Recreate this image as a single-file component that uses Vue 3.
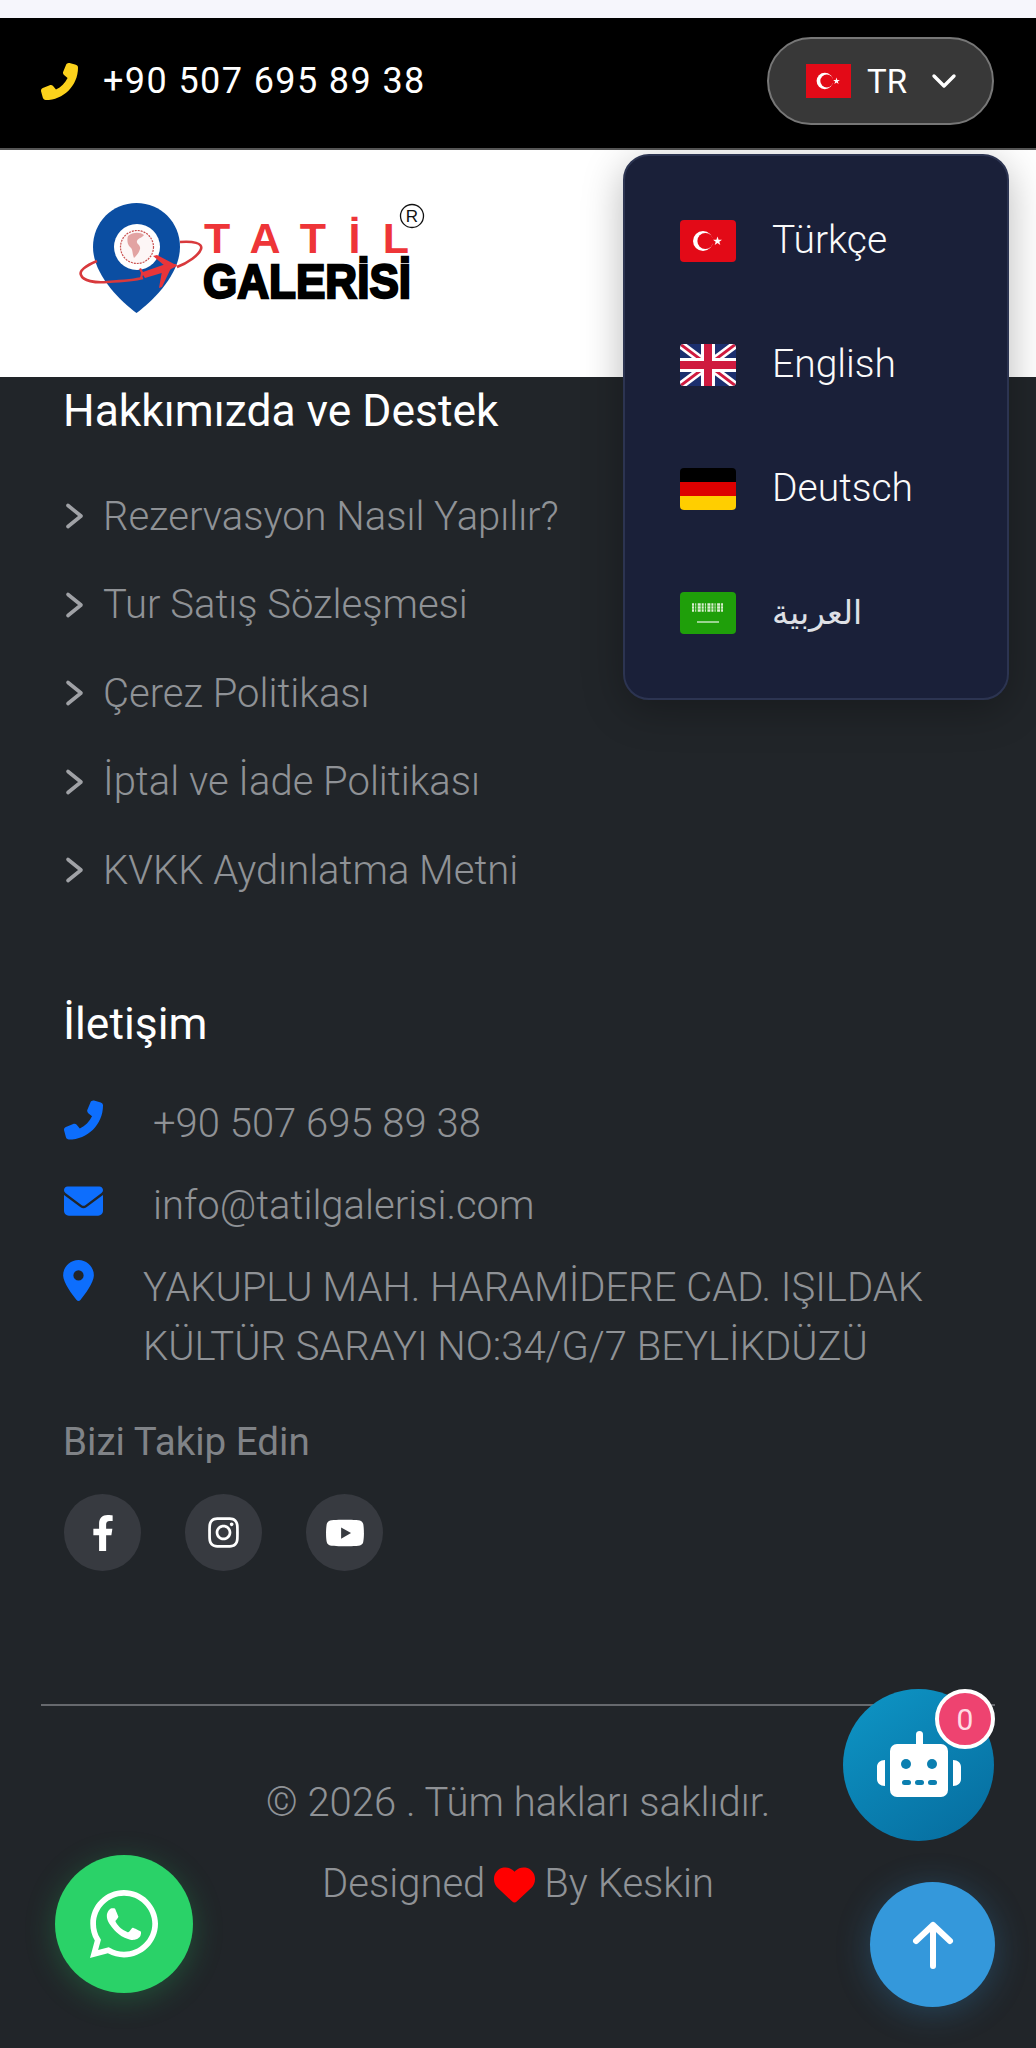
<script setup>
const links = ['Rezervasyon Nasıl Yapılır?', 'Tur Satış Sözleşmesi', 'Çerez Politikası', 'İptal ve İade Politikası', 'KVKK Aydınlatma Metni']
</script>

<template>
  <div class="page">
    <div class="strip"></div>
    <div class="topbar">
      <div class="top-phone">
        <svg class="top-phone-icon" viewBox="0 0 512 512"><g transform="translate(512 0) scale(-1 1)"><path d="M164.9 24.6c-7.7-18.6-28-28.5-47.4-23.2l-88 24C12.1 30.2 0 46 0 64C0 311.4 200.6 512 448 512c18 0 33.8-12.1 38.6-29.5l24-88c5.3-19.4-4.6-39.7-23.2-47.4l-96-40c-16.3-6.8-35.2-2.1-46.3 11.6L304.7 368C234.3 334.7 177.3 277.7 144 207.3L193.3 167c13.7-11.2 18.4-30 11.6-46.3l-40-96z"/></g></svg>
        <span>+90 507 695 89 38</span>
      </div>
      <div class="lang-btn">
        <svg class="flag-sm" viewBox="0 0 45 34"><rect width="45" height="34" fill="#e30a17"/><circle cx="18.8" cy="17" r="8.2" fill="#fff"/><circle cx="20.8" cy="17" r="6.5" fill="#e30a17"/><polygon fill="#fff" points="30.5,13.6 31.3,16 33.9,16 31.8,17.6 32.6,20 30.5,18.5 28.4,20 29.2,17.6 27.1,16 29.7,16"/></svg>
        <span class="lang-code">TR</span>
        <svg class="chev" viewBox="0 0 26 16"><path d="M3 3l10 10L23 3" fill="none" stroke="#fff" stroke-width="3.4" stroke-linecap="round" stroke-linejoin="round"/></svg>
      </div>
    </div>

    <header class="brand">
      <svg class="logo" viewBox="0 0 350 120">
        <path d="M87 39C100 38 110 40 108 46 106 52 95 60 84 64" fill="none" stroke="#d8393c" stroke-width="2.6"/>
        <path d="M43.5 0C19 0 0 19.5 0 44c0 27 26 53 43.5 66C61 97 87 71 87 44 87 19.5 68 0 43.5 0z" fill="#0b4ea2"/>
        <circle cx="44" cy="44" r="23" fill="#fff"/>
        <circle cx="44" cy="44" r="16.5" fill="#fdf6f6" stroke="#c9504f" stroke-width="1.2" stroke-dasharray="2 1"/>
        <path d="M35 33c5-4 12-4 16-1-2 3-6 3-7 6s4 4 3 8-4 7-6 9c-2-5-1-9-4-11-3-3-3-8-2-11z" fill="#e2a3a2"/>
        <path d="M4 58C-8 63-14 68-12 72-10 78 2 80 14 79 30 78 42 77 50 75" fill="none" stroke="#d8393c" stroke-width="2.6"/>
        <path d="M50 72l2 3 20-6 12-6-1-2-13 1-20 7-2-4-2 1 2 4-1 5 2 0z" fill="#e8353a"/>
        <path d="M72 63L60 53l4-1 19 10zM69 68l-3 17 3-1 9-19z" fill="#e8353a"/>
        <text x="111" y="50" class="logo-top" textLength="205" lengthAdjust="spacing">TATİL</text>
        <text x="110" y="95" class="logo-bottom" textLength="208" lengthAdjust="spacingAndGlyphs">GALERİSİ</text>
        <circle cx="319" cy="13" r="11.5" fill="#fff" stroke="#111" stroke-width="1.3"/>
        <text x="319" y="19" class="logo-r">R</text>
      </svg>
    </header>

    <footer class="footer">
      <div class="about">
        <h3 class="heading">Hakkımızda ve Destek</h3>
        <ul class="links">
          <li v-for="l in links" :key="l" class="link">
            <svg class="link-chev" viewBox="0 0 20 28"><path d="M4 3.5L17 14 4 24.5" fill="none" stroke="#a0a2a6" stroke-width="3.6" stroke-linecap="round" stroke-linejoin="round"/></svg>
            <span>{{ l }}</span>
          </li>
        </ul>
      </div>

      <div class="contact">
        <h3 class="heading">İletişim</h3>
        <div class="c-row c-phone">
          <svg class="c-icon" viewBox="0 0 512 512"><g transform="translate(512 0) scale(-1 1)"><path d="M164.9 24.6c-7.7-18.6-28-28.5-47.4-23.2l-88 24C12.1 30.2 0 46 0 64C0 311.4 200.6 512 448 512c18 0 33.8-12.1 38.6-29.5l24-88c5.3-19.4-4.6-39.7-23.2-47.4l-96-40c-16.3-6.8-35.2-2.1-46.3 11.6L304.7 368C234.3 334.7 177.3 277.7 144 207.3L193.3 167c13.7-11.2 18.4-30 11.6-46.3l-40-96z"/></g></svg>
          <span>+90 507 695 89 38</span>
        </div>
        <div class="c-row c-mail">
          <svg class="c-icon" viewBox="0 64 512 384"><path d="M48 64C21.5 64 0 85.5 0 112c0 15.1 7.1 29.3 19.2 38.4L236.8 313.6c11.4 8.5 27 8.5 38.4 0L492.8 150.4c12.1-9.1 19.2-23.3 19.2-38.4c0-26.5-21.5-48-48-48H48zM0 176V384c0 35.3 28.7 64 64 64H448c35.3 0 64-28.7 64-64V176L294.4 339.2c-22.8 17.1-54 17.1-76.8 0L0 176z"/></svg>
          <span>info@tatilgalerisi.com</span>
        </div>
        <div class="c-row c-addr">
          <svg class="c-pin" viewBox="0 0 384 512"><path d="M215.7 499.2C267 435 384 279.4 384 192C384 86 298 0 192 0S0 86 0 192c0 87.4 117 243 168.3 307.2c12.3 15.3 35.1 15.3 47.4 0zM192 128a64 64 0 1 1 0 128 64 64 0 1 1 0-128z"/></svg>
          <span>YAKUPLU MAH. HARAMİDERE CAD. IŞILDAK KÜLTÜR SARAYI NO:34/G/7 BEYLİKDÜZÜ</span>
        </div>
        <div class="follow">Bizi Takip Edin</div>
        <div class="socials">
          <div class="social"><svg class="s-fb" viewBox="0 0 320 512"><path d="M279.14 288l14.22-92.66h-88.91v-60.13c0-25.35 12.42-50.06 52.24-50.06h40.42V6.26S260.43 0 225.36 0c-73.22 0-121.08 44.38-121.08 124.72v70.62H22.89V288h81.39v224h100.17V288z"/></svg></div>
          <div class="social"><svg class="s-ig" viewBox="0 0 448 512"><path d="M224.1 141c-63.6 0-114.9 51.3-114.9 114.9s51.3 114.9 114.9 114.9S339 319.5 339 255.9 287.7 141 224.1 141zm0 189.6c-41.1 0-74.7-33.5-74.7-74.7s33.5-74.7 74.7-74.7 74.7 33.5 74.7 74.7-33.6 74.7-74.7 74.7zm146.4-194.3c0 14.9-12 26.8-26.8 26.8-14.9 0-26.8-12-26.8-26.8s12-26.8 26.8-26.8 26.8 12 26.8 26.8zm76.1 27.2c-1.7-35.9-9.9-67.7-36.2-93.9-26.2-26.2-58-34.4-93.9-36.2-37-2.1-147.9-2.1-184.9 0-35.8 1.7-67.6 9.9-93.9 36.1s-34.4 58-36.2 93.9c-2.1 37-2.1 147.9 0 184.9 1.7 35.9 9.9 67.7 36.2 93.9s58 34.4 93.9 36.2c37 2.1 147.9 2.1 184.9 0 35.9-1.7 67.7-9.9 93.9-36.2 26.2-26.2 34.4-58 36.2-93.9 2.1-37 2.1-147.8 0-184.8zM398.8 388c-7.8 19.6-22.9 34.7-42.6 42.6-29.5 11.7-99.5 9-132.1 9s-102.7 2.6-132.1-9c-19.6-7.8-34.7-22.9-42.6-42.6-11.7-29.5-9-99.5-9-132.1s-2.6-102.7 9-132.1c7.8-19.6 22.9-34.7 42.6-42.6 29.5-11.7 99.5-9 132.1-9s102.7-2.6 132.1 9c19.6 7.8 34.7 22.9 42.6 42.6 11.7 29.5 9 99.5 9 132.1s2.7 102.7-9 132.1z"/></svg></div>
          <div class="social"><svg class="s-yt" viewBox="0 0 576 512"><path d="M549.655 124.083c-6.281-23.65-24.787-42.276-48.284-48.597C458.781 64 288 64 288 64S117.22 64 74.629 75.486c-23.497 6.322-42.003 24.947-48.284 48.597-11.412 42.867-11.412 132.305-11.412 132.305s0 89.438 11.412 132.305c6.281 23.65 24.787 41.5 48.284 47.821C117.22 448 288 448 288 448s170.78 0 213.371-11.486c23.497-6.321 42.003-24.171 48.284-47.821 11.412-42.867 11.412-132.305 11.412-132.305s0-89.438-11.412-132.305zm-317.51 213.508V175.185l142.739 81.205-142.739 81.201z"/></svg></div>
        </div>
      </div>

      <div class="rule"></div>
      <div class="copy">© 2026 . Tüm hakları saklıdır.</div>
      <div class="designed">
        <span>Designed</span>
        <svg class="heart" viewBox="0 0 512 512"><path d="M47.6 300.4L228.3 469.1c7.5 7 17.4 10.9 27.7 10.9s20.2-3.9 27.7-10.9L464.4 300.4c30.4-28.3 47.6-68 47.6-109.5v-5.8c0-69.9-50.5-129.5-119.4-141C347 36.5 300.6 51.4 268 84L256 96 244 84c-32.6-32.6-79-47.5-124.6-39.9C50.5 55.6 0 115.2 0 185.1v5.8c0 41.5 17.2 81.2 47.6 109.5z"/></svg>
        <span>By Keskin</span>
      </div>
    </footer>

    <div class="menu">
      <div class="menu-item">
        <svg class="flag" viewBox="0 0 56 42"><rect width="56" height="42" rx="4" fill="#e30a17"/><circle cx="23" cy="21" r="10" fill="#fff"/><circle cx="25.4" cy="21" r="8" fill="#e30a17"/><polygon fill="#fff" points="37.5,16.5 38.6,19.7 42,19.7 39.3,21.7 40.3,24.9 37.5,23 34.7,24.9 35.7,21.7 33,19.7 36.4,19.7"/></svg>
        <span>Türkçe</span>
      </div>
      <div class="menu-item">
        <svg class="flag" viewBox="0 0 56 42"><defs><clipPath id="uk"><rect width="56" height="42" rx="4"/></clipPath></defs><g clip-path="url(#uk)"><rect width="56" height="42" fill="#1b2f6e"/><path d="M0 0L56 42M56 0L0 42" stroke="#fff" stroke-width="8"/><path d="M0 0L56 42M56 0L0 42" stroke="#cf1b3f" stroke-width="3"/><path d="M28 0V42M0 21H56" stroke="#fff" stroke-width="14"/><path d="M28 0V42M0 21H56" stroke="#cf1b3f" stroke-width="8"/></g></svg>
        <span>English</span>
      </div>
      <div class="menu-item">
        <svg class="flag" viewBox="0 0 56 42"><defs><clipPath id="de"><rect width="56" height="42" rx="4"/></clipPath></defs><g clip-path="url(#de)"><rect width="56" height="14" fill="#000"/><rect y="14" width="56" height="14" fill="#dd0000"/><rect y="28" width="56" height="14" fill="#ffce00"/></g></svg>
        <span>Deutsch</span>
      </div>
      <div class="menu-item">
        <svg class="flag" viewBox="0 0 56 42"><rect width="56" height="42" rx="4" fill="#1f9f0a"/><path d="M12 12.5h31M12 15.5h31M12 18.5h31" stroke="#dcefd2" stroke-width="2.6" stroke-dasharray="2 1.2 1 1.5 3 1"/><path d="M17 30h22" stroke="#fff" stroke-width="1.1"/></svg>
        <span class="ar-label" lang="ar" dir="rtl">العربية</span>
      </div>
    </div>

    <div class="chat">
      <svg class="robot" viewBox="0 0 84 68">
        <rect x="39" y="0" width="7" height="16" rx="3.5" fill="#fff"/>
        <rect x="13" y="13" width="58" height="53" rx="7" fill="#fff"/>
        <path d="M8 29v26c-5 0-8-3-8-7V36c0-4 3-7 8-7zM76 29v26c5 0 8-3 8-7V36c0-4-3-7-8-7z" fill="#fff"/>
        <circle cx="29" cy="33" r="5" fill="#0b7fb0"/><circle cx="55" cy="33" r="5" fill="#0b7fb0"/>
        <rect x="25" y="49" width="9" height="5" rx="2.5" fill="#0b7fb0"/><rect x="38" y="49" width="9" height="5" rx="2.5" fill="#0b7fb0"/><rect x="51" y="49" width="9" height="5" rx="2.5" fill="#0b7fb0"/>
      </svg>
      <div class="badge">0</div>
    </div>

    <div class="to-top">
      <svg viewBox="0 0 42 48"><path d="M21 45V4M4 20L21 4l17 16" fill="none" stroke="#fff" stroke-width="6" stroke-linecap="round" stroke-linejoin="round"/></svg>
    </div>

    <div class="wa">
      <svg viewBox="0 0 448 512"><path d="M380.9 97.1C339 55.1 283.2 32 223.9 32c-122.4 0-222 99.6-222 222 0 39.1 10.2 77.3 29.6 111L0 480l117.7-30.9c32.4 17.7 68.9 27 106.1 27h.1c122.3 0 224.1-99.6 224.1-222 0-59.3-25.2-115-67.1-157zm-157 341.6c-33.2 0-65.7-8.9-94-25.7l-6.7-4-69.8 18.3L72 359.2l-4.4-7c-18.5-29.4-28.2-63.3-28.2-98.2 0-101.7 82.8-184.5 184.6-184.5 49.3 0 95.6 19.2 130.4 54.1 34.8 34.9 56.2 81.2 56.1 130.5 0 101.8-84.9 184.6-186.6 184.6zm101.2-138.2c-5.5-2.8-32.8-16.2-37.9-18-5.1-1.9-8.8-2.8-12.5 2.8-3.7 5.6-14.3 18-17.6 21.8-3.2 3.7-6.5 4.2-12 1.4-32.6-16.3-54-29.1-75.5-66-5.7-9.8 5.7-9.1 16.3-30.3 1.8-3.7.9-6.9-.5-9.7-1.4-2.8-12.5-30.1-17.1-41.2-4.5-10.8-9.1-9.3-12.5-9.5-3.2-.2-6.9-.2-10.6-.2-3.7 0-9.7 1.4-14.8 6.9-5.1 5.6-19.4 19-19.4 46.3 0 27.3 19.9 53.7 22.6 57.4 2.8 3.7 39.1 59.7 94.8 83.8 35.2 15.2 49 16.5 66.6 13.9 10.7-1.6 32.8-13.4 37.4-26.4 4.6-13 4.6-24.1 3.2-26.4-1.3-2.5-5-3.9-10.5-6.6z"/></svg>
    </div>
  </div>
</template>

<style>
html, body { margin: 0; background: #212529; }
</style>

<style scoped>
* { box-sizing: border-box; }
.page { position: relative; width: 1036px; height: 2048px; overflow: hidden; background: #212529; font-family: Roboto, "Liberation Sans", sans-serif; }
.strip { height: 18px; background: #f6f6fc; }
.topbar { height: 132px; background: #000; border-bottom: 2px solid #555; display: flex; align-items: center; justify-content: space-between; padding: 0 42px 4px 41px; }
.top-phone { display: flex; align-items: center; gap: 25px; color: #fff; font-size: 36px; letter-spacing: 1.4px; }
.top-phone-icon { width: 37px; height: 37px; fill: #fcd21c; }
.lang-btn { width: 227px; height: 88px; border-radius: 44px; background: #383838; border: 2.5px solid #777; display: flex; align-items: center; padding-left: 37px; color: #fff; }
.flag-sm { width: 45px; height: 34px; }
.lang-code { margin-left: 16px; font-size: 33px; font-weight: 400; }
.chev { width: 26px; height: 16px; margin-left: 24px; }
.brand { height: 227px; background: #fff; padding: 53px 0 0 93px; }
.logo { width: 350px; height: 120px; display: block; overflow: visible; }
.logo-top { font: 700 43px "Liberation Sans", sans-serif; fill: #ee3538; }
.logo-bottom { font: 700 49px "Liberation Sans", sans-serif; fill: #000; stroke: #000; stroke-width: 2.4px; }
.logo-r { font: 400 17px "Liberation Sans", sans-serif; fill: #111; text-anchor: middle; }
.footer { padding: 0 41px; }
.heading { margin: 0; font-size: 44.4px; line-height: 68px; font-weight: 400; color: #fff; }
.about { padding: 0 0 0 22px; }
.about .heading { height: 68px; }
.links { list-style: none; margin: 27px 0 0; padding: 0 0 0 1px; }
.link { height: 88.5px; display: flex; align-items: center; gap: 19px; font-size: 40px; font-weight: 300; color: #8f9296; }
.link-chev { width: 20px; height: 28px; }
.contact { padding: 0 0 0 22px; margin-top: 75px; }
.c-row { display: flex; font-size: 40px; font-weight: 300; color: #8f9296; }
.c-row svg { fill: #0d6efd; flex: none; }
.c-phone { margin-top: 39px; align-items: center; height: 53px; gap: 50px; }
.c-mail { margin-top: 29px; align-items: center; height: 53px; gap: 50px; }
.c-icon { width: 39px; height: 40px; margin-left: 1px; }
.c-phone .c-icon { margin-bottom: 6px; }
.c-mail .c-icon { height: 30px; margin-bottom: 8px; }
.c-addr { margin-top: 26px; gap: 49px; line-height: 59px; padding-right: 60px; }
.c-pin { width: 31px; height: 41px; margin-top: 2px; }
.follow { margin-top: 40.5px; font-size: 38.6px; font-weight: 400; color: #808387; line-height: 52px; }
.socials { display: flex; gap: 44px; margin: 26px 0 0 1px; }
.social { width: 77px; height: 77px; border-radius: 50%; background: #373a40; display: flex; align-items: center; justify-content: center; }
.social svg { fill: #fff; }
.s-fb { width: 24px; height: 36px; }
.s-ig { width: 31px; height: 35px; }
.s-yt { width: 40px; height: 36px; }
.rule { margin-top: 133px; height: 2px; background: #66696d; }
.copy { margin-top: 69px; text-align: center; font-size: 40px; font-weight: 300; color: #8f9296; line-height: 56px; }
.designed { margin-top: 25px; display: flex; justify-content: center; align-items: center; gap: 9px; font-size: 40px; font-weight: 300; color: #8f9296; line-height: 56px; }
.heart { width: 41px; height: 41px; fill: #ff0000; }
.menu { position: absolute; left: 623px; top: 154px; width: 386px; height: 546px; border-radius: 26px; background: #1a2039; border: 2px solid #2c3451; box-shadow: 0 10px 40px rgba(0,0,0,.28); padding: 22px 0 0 55px; }
.menu-item { height: 124px; display: flex; align-items: center; gap: 36px; color: #fafafa; font-size: 39px; font-weight: 300; }
.flag { width: 56px; height: 42px; flex: none; margin-top: 2px; }
.ar-label { font-family: "DejaVu Sans", sans-serif; font-size: 33px; font-weight: 300; color: #dfe0e6; }
.chat { position: absolute; left: 843px; top: 1689px; width: 151px; height: 152px; border-radius: 50%; background: linear-gradient(145deg, #0e96c6, #066b9d); display: flex; align-items: center; justify-content: center; }
.robot { width: 84px; height: 68px; }
.badge { position: absolute; right: -1px; top: 0; width: 60px; height: 60px; border-radius: 50%; background: #ee4370; border: 4px solid #fff; color: #ffdbe4; display: flex; align-items: center; justify-content: center; font-size: 30px; }
.to-top { position: absolute; left: 870px; top: 1882px; width: 125px; height: 125px; border-radius: 50%; background: #3498db; box-shadow: 0 5px 34px rgba(52,152,219,.28); display: flex; align-items: center; justify-content: center; }
.to-top svg { width: 42px; height: 48px; }
.wa { position: absolute; left: 55px; top: 1855px; width: 138px; height: 138px; border-radius: 50%; background: #2ad268; box-shadow: 0 6px 30px rgba(37,211,102,.25); display: flex; align-items: center; justify-content: center; }
.wa svg { width: 68px; height: 78px; fill: #fff; }
</style>
